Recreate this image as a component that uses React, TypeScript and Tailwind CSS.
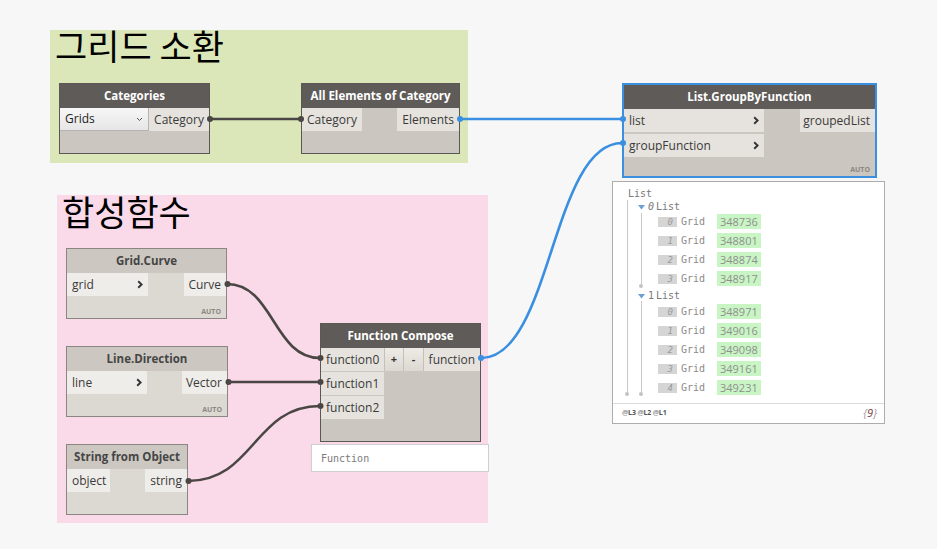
import React from "react";

const SANS = "font-['Open_Sans','Noto_Sans',sans-serif]";
const MONO = "font-['DejaVu_Sans_Mono','Liberation_Mono',monospace]";

function Chevron() {
  return (
    <svg width="6" height="9" viewBox="0 0 6 9" className="shrink-0">
      <path d="M1.2 1.2 L4.6 4.5 L1.2 7.8" fill="none" stroke="#333" strokeWidth="1.9" />
    </svg>
  );
}

function Auto() {
  return (
    <div className="mt-auto flex justify-end pr-[5px] pb-[2px]">
      <span className={`${SANS} text-[7px] font-bold leading-[9px] text-[#8c8781]`}>AUTO</span>
    </div>
  );
}

function Wires() {
  const dark = "#4a4644";
  const blue = "#3b8fe0";
  const bez = (x1: number, y1: number, x2: number, y2: number) => {
    const dx = (x2 - x1) / 2;
    return `M${x1} ${y1} C${x1 + dx} ${y1}, ${x2 - dx} ${y2}, ${x2} ${y2}`;
  };
  return (
    <svg className="absolute left-0 top-0" width="937" height="549" viewBox="0 0 937 549">
      <path d={bez(210, 119, 301, 119)} stroke={dark} strokeWidth="2.6" fill="none" />
      <path d={bez(227, 284, 320, 358)} stroke={dark} strokeWidth="2.6" fill="none" />
      <path d={bez(228, 382, 320, 382)} stroke={dark} strokeWidth="2.6" fill="none" />
      <path d={bez(188, 481, 320, 406)} stroke={dark} strokeWidth="2.6" fill="none" />
      <path d={bez(460, 119, 622, 119)} stroke={blue} strokeWidth="2.6" fill="none" />
      <path d={bez(481, 358, 622, 143)} stroke={blue} strokeWidth="2.6" fill="none" />
    </svg>
  );
}

function Dots() {
  const dark = "#4a4644";
  const blue = "#3b8fe0";
  return (
    <svg className="absolute left-0 top-0" width="937" height="549" viewBox="0 0 937 549">
      <circle cx="210" cy="119" r="3" fill={dark} />
      <circle cx="301" cy="119" r="3" fill={dark} />
      <circle cx="227.5" cy="284" r="3" fill={dark} />
      <circle cx="228.5" cy="382" r="3" fill={dark} />
      <circle cx="188.5" cy="481" r="3" fill={dark} />
      <circle cx="320.5" cy="358" r="3" fill={dark} />
      <circle cx="320.5" cy="382" r="3" fill={dark} />
      <circle cx="320.5" cy="406" r="3" fill={dark} />
      <circle cx="460" cy="119" r="3" fill={blue} />
      <circle cx="481" cy="358" r="3" fill={blue} />
      <circle cx="623" cy="119" r="3" fill={blue} />
      <circle cx="623" cy="143" r="3" fill={blue} />
    </svg>
  );
}

const values0 = ["348736", "348801", "348874", "348917"];
const values1 = ["348971", "349016", "349098", "349161", "349231"];

function ItemRow({ i, v }: { i: number; v: string }) {
  return (
    <div className="h-[19px] flex items-center pl-[45px]">
      <div className={`${MONO} w-[19px] h-[10px] bg-[#d5d5d5] text-[9px] italic leading-[10px] text-[#9a9a9a] text-right pr-[4px]`}>
        {i}
      </div>
      <span className={`${MONO} w-[40px] pl-[4px] text-[10px] text-[#8a8a8a]`}>Grid</span>
      <div className={`${SANS} w-[44px] h-[15px] bg-[#c9f5c4] text-[11px] leading-[15px] text-[#8f8f8f] pl-[3px]`}>
        {v}
      </div>
    </div>
  );
}

function Tri() {
  return (
    <svg width="7" height="5" viewBox="0 0 7 5" className="mr-[3px] mt-[3px]">
      <path d="M0 0 L7 0 L3.5 4.5 Z" fill="#6d9fd6" />
    </svg>
  );
}

function Watch() {
  return (
    <div className="absolute left-[612px] top-[181px] w-[273px] h-[243px] bg-white border border-[#adadad] flex flex-col">
      <div className="relative flex-1 pt-[5px]">
        <div className="absolute left-[14px] top-[18px] h-[194px] w-px bg-[#c9c9c9]" />
        <div className="absolute left-[12px] top-[210px] w-[4px] h-[4px] rounded-full bg-[#c3c3c3]" />
        <div className="absolute left-[28px] top-[31px] h-[71px] w-px bg-[#c9c9c9]" />
        <div className="absolute left-[26px] top-[102px] w-[4px] h-[4px] rounded-full bg-[#c3c3c3]" />
        <div className="absolute left-[28px] top-[119px] h-[91px] w-px bg-[#c9c9c9]" />
        <div className="absolute left-[26px] top-[210px] w-[4px] h-[4px] rounded-full bg-[#c3c3c3]" />

        <div className={`${MONO} h-[13px] pl-[15px] flex items-center text-[10px] text-[#7a7a7a]`}>List</div>
        <div className={`${MONO} h-[12px] pl-[25px] flex items-center text-[10px] text-[#7a7a7a]`}>
          <Tri />
          <span className="italic mr-[2px]">0</span>
          <span>List</span>
        </div>
        {values0.map((v, i) => (
          <ItemRow key={v} i={i} v={v} />
        ))}
        <div className={`${MONO} h-[14px] pl-[25px] flex items-center text-[10px] text-[#7a7a7a]`}>
          <Tri />
          <span className="mr-[2px]">1</span>
          <span>List</span>
        </div>
        {values1.map((v, i) => (
          <ItemRow key={v} i={i} v={v} />
        ))}
      </div>
      <div className="h-[20px] border-t border-[#dcdcdc] flex items-center justify-between pl-[9px] pr-[7px]">
        <span className={`${SANS} text-[7px] font-bold text-[#555] tracking-tight`}>
          <span className="text-[#999]">@</span>L3 <span className="text-[#999]">@</span>L2 <span className="text-[#999]">@</span>L1
        </span>
        <span className={`${SANS} text-[11px] italic text-[#999]`}>
          {"{"}
          <span className="text-[#7a3a3a]">9</span>
          {"}"}
        </span>
      </div>
    </div>
  );
}

export default function App() {
  const darkHeader = `h-[24px] shrink-0 bg-[#5f5b58] text-white flex items-center justify-center text-[11.5px] font-bold ${SANS}`;
  const lightHeader = `h-[24px] shrink-0 bg-[#ccc8c1] text-[#454545] flex items-center justify-center text-[11.5px] font-bold ${SANS}`;
  const cellDark = `h-[23px] flex items-center px-[5px] text-[12px] text-[#3a3a3a] bg-[#e6e3de] ${SANS}`;
  const cellLight = `h-[23px] flex items-center px-[5px] text-[12px] text-[#3a3a3a] bg-[#efede9] ${SANS}`;

  return (
    <div className="relative w-[937px] h-[549px] overflow-hidden bg-[#f7f7f7]">
      {/* Groups */}
      <div className="absolute left-[50px] top-[30px] w-[418px] h-[133px] bg-[#dce7b9]">
        <div className="pl-[5px] -mt-[3px] text-[35px] leading-[35px] text-black font-['Noto_Sans_CJK_KR','Noto_Sans_CJK_SC',sans-serif]">
          그리드 소환
        </div>
      </div>
      <div className="absolute left-[57px] top-[195px] w-[431px] h-[328px] bg-[#fad9e9]">
        <div className="pl-[5px] -mt-[2px] text-[35px] leading-[35px] text-black font-['Noto_Sans_CJK_KR','Noto_Sans_CJK_SC',sans-serif]">
          합성함수
        </div>
      </div>

      <Wires />

      {/* Categories */}
      <div className="absolute left-[59px] top-[83px] w-[151px] h-[71px] border border-[#5b5754] bg-[#cbc6bf] flex flex-col">
        <div className={darkHeader}>Categories</div>
        <div className="flex">
          <div className={`w-[89px] h-[23px] flex items-center justify-between pl-[5px] pr-[5px] bg-gradient-to-b from-[#f7f7f7] to-[#e6e6e6] border-r border-b border-[#b4b4b4] text-[12px] text-[#222] ${SANS}`}>
            <span>Grids</span>
            <svg width="7" height="5" viewBox="0 0 7 5">
              <path d="M1 1 L3.5 3.5 L6 1" fill="none" stroke="#555" strokeWidth="1" />
            </svg>
          </div>
          <div className={`${cellDark} w-[60px] justify-end`}>Category</div>
        </div>
      </div>

      {/* All Elements of Category */}
      <div className="absolute left-[301px] top-[83px] w-[159px] h-[71px] border border-[#5b5754] bg-[#cbc6bf] flex flex-col">
        <div className={darkHeader}>All Elements of Category</div>
        <div className="flex justify-between">
          <div className={`${cellDark} w-[60px]`}>Category</div>
          <div className={`${cellDark} w-[62px] justify-end`}>Elements</div>
        </div>
      </div>

      {/* List.GroupByFunction */}
      <div className="absolute left-[622px] top-[83px] w-[255px] h-[95px] border-2 border-[#3b8fe0] bg-[#cbc6bf] flex flex-col">
        <div className={`${darkHeader} h-[22px]`}>List.GroupByFunction</div>
        <div className="flex justify-between">
          <div className="flex flex-col gap-[2px]">
            <div className={`${cellDark} w-[140px] justify-between`}>
              <span>list</span>
              <Chevron />
            </div>
            <div className={`${cellDark} w-[140px] justify-between`}>
              <span>groupFunction</span>
              <Chevron />
            </div>
          </div>
          <div className={`${cellDark} w-[75px] justify-end`}>groupedList</div>
        </div>
        <Auto />
      </div>

      {/* Grid.Curve */}
      <div className="absolute left-[66px] top-[248px] w-[161px] h-[71px] border border-[#8a8682] bg-[#dcd9d3] flex flex-col">
        <div className={lightHeader}>Grid.Curve</div>
        <div className="flex justify-between">
          <div className={`${cellLight} w-[81px] justify-between`}>
            <span>grid</span>
            <Chevron />
          </div>
          <div className={`${cellLight} w-[42px] justify-end`}>Curve</div>
        </div>
        <Auto />
      </div>

      {/* Line.Direction */}
      <div className="absolute left-[66px] top-[346px] w-[162px] h-[71px] border border-[#8a8682] bg-[#dcd9d3] flex flex-col">
        <div className={lightHeader}>Line.Direction</div>
        <div className="flex justify-between">
          <div className={`${cellLight} w-[80px] justify-between`}>
            <span>line</span>
            <Chevron />
          </div>
          <div className={`${cellLight} w-[45px] justify-end`}>Vector</div>
        </div>
        <Auto />
      </div>

      {/* String from Object */}
      <div className="absolute left-[66px] top-[444px] w-[122px] h-[71px] border border-[#8a8682] bg-[#dcd9d3] flex flex-col">
        <div className={lightHeader}>String from Object</div>
        <div className="flex justify-between">
          <div className={`${cellLight} w-[43px]`}>object</div>
          <div className={`${cellLight} w-[42px] justify-end`}>string</div>
        </div>
      </div>

      {/* Function Compose */}
      <div className="absolute left-[320px] top-[323px] w-[161px] h-[119px] border border-[#5b5754] bg-[#cbc6bf] flex flex-col">
        <div className={darkHeader}>Function Compose</div>
        <div className="flex">
          <div className="flex flex-col gap-[1px]">
            <div className={`${cellDark} w-[63px]`}>function0</div>
            <div className={`${cellDark} w-[63px]`}>function1</div>
            <div className={`${cellDark} w-[63px]`}>function2</div>
          </div>
          <div className="flex h-[23px]">
            <div className={`w-[20px] h-[23px] flex items-center justify-center bg-gradient-to-b from-[#eeebe6] to-[#dcd8d2] border-x border-[#c4bfb8] text-[11px] font-bold text-[#333] ${SANS}`}>+</div>
            <div className={`w-[20px] h-[23px] flex items-center justify-center bg-gradient-to-b from-[#eeebe6] to-[#dcd8d2] border-r border-[#c4bfb8] text-[11px] font-bold text-[#333] ${SANS}`}>-</div>
          </div>
          <div className={`${cellDark} w-[56px] justify-end`}>function</div>
        </div>
      </div>
      <div className="absolute left-[311px] top-[444px] w-[178px] h-[28px] bg-white border border-[#cfcfcf] flex items-center pl-[9px]">
        <span className={`${MONO} text-[10px] text-[#7a7a7a]`}>Function</span>
      </div>

      <Dots />

      <Watch />
    </div>
  );
}
